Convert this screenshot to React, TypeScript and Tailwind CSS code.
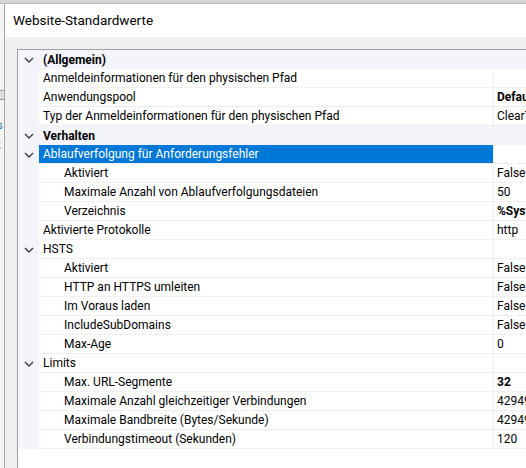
import React from "react";

type Row = {
  label: string;
  value?: string;
  indent?: boolean;
  category?: boolean;
  expandable?: boolean;
  boldValue?: boolean;
  selected?: boolean;
};

const rows: Row[] = [
  { label: "(Allgemein)", category: true },
  { label: "Anmeldeinformationen für den physischen Pfad", value: "" },
  { label: "Anwendungspool", value: "DefaultAppPool", boldValue: true },
  { label: "Typ der Anmeldeinformationen für den physischen Pfad", value: "ClearText" },
  { label: "Verhalten", category: true },
  { label: "Ablaufverfolgung für Anforderungsfehler", expandable: true, selected: true },
  { label: "Aktiviert", value: "False", indent: true },
  { label: "Maximale Anzahl von Ablaufverfolgungsdateien", value: "50", indent: true },
  { label: "Verzeichnis", value: "%SystemDrive%\\inetpub\\logs", indent: true, boldValue: true },
  { label: "Aktivierte Protokolle", value: "http" },
  { label: "HSTS", expandable: true },
  { label: "Aktiviert", value: "False", indent: true },
  { label: "HTTP an HTTPS umleiten", value: "False", indent: true },
  { label: "Im Voraus laden", value: "False", indent: true },
  { label: "IncludeSubDomains", value: "False", indent: true },
  { label: "Max-Age", value: "0", indent: true },
  { label: "Limits", expandable: true },
  { label: "Max. URL-Segmente", value: "32", indent: true, boldValue: true },
  { label: "Maximale Anzahl gleichzeitiger Verbindungen", value: "4294967295", indent: true },
  { label: "Maximale Bandbreite (Bytes/Sekunde)", value: "4294967295", indent: true },
  { label: "Verbindungstimeout (Sekunden)", value: "120", indent: true },
];

function Chevron() {
  return (
    <svg width="10" height="6" viewBox="0 0 10 6" className="block">
      <path d="M1 1 L5 5 L9 1" fill="none" stroke="#3c3c3c" strokeWidth="1.4" />
    </svg>
  );
}

function GridRow({ row }: { row: Row }) {
  const hasChevron = row.category || row.expandable;
  if (row.category) {
    return (
      <div className="flex h-[19px] bg-[#f3f5fa]">
        <div className="w-[21px] shrink-0 flex items-center justify-center">
          <Chevron />
        </div>
        <div className="flex-1 flex items-center pl-[4px] font-bold whitespace-nowrap">{row.label}</div>
      </div>
    );
  }
  return (
    <div className="flex h-[19px]">
      <div className="w-[21px] shrink-0 bg-[#f3f5fa] flex items-center justify-center">
        {hasChevron && <Chevron />}
      </div>
      <div className="flex-1 flex min-w-0 border-b border-[#f0f0f0]">
        <div
          className={
            row.selected
              ? "w-[454px] shrink-0 flex items-center bg-[#0078d7] text-white pl-[4px] whitespace-nowrap overflow-hidden"
              : "w-[454px] shrink-0 flex items-center pl-[4px] whitespace-nowrap overflow-hidden"
          }
        >
          <span className={row.indent ? "pl-[21px]" : ""}>{row.label}</span>
        </div>
        <div className="w-px shrink-0 bg-[#f0f0f0]" />
        <div
          className={
            row.boldValue
              ? "flex-1 flex items-center pl-[3px] whitespace-nowrap overflow-hidden font-bold"
              : "flex-1 flex items-center pl-[3px] whitespace-nowrap overflow-hidden"
          }
        >
          {row.value}
        </div>
      </div>
    </div>
  );
}

export default function App() {
  return (
    <div
      className="w-[526px] h-[468px] overflow-hidden bg-white flex flex-col text-[12px] text-black"
      style={{ fontFamily: 'Roboto, "Noto Sans", sans-serif' }}
    >
      <div className="h-[4px] shrink-0 bg-[#d3d5d9] border-b border-[#b4b7bc]" />
      <div className="flex flex-1 min-h-0">
        {/* sliver of the window behind the dialog */}
        <div className="w-[4px] shrink-0 bg-[#f4f4f4] flex flex-col overflow-hidden text-[11px] leading-none">
          <div className="h-[86px]" />
          <div className="h-[10px] border-y border-[#9a9a9a] bg-[#dcdcdc]" />
          <div className="h-[20px]" />
          <div className="text-[#2a6fb8] -ml-[3px]">s</div>
          <div className="h-[8px]" />
          <div className="-ml-[3px]">t</div>
        </div>
        <div className="w-px shrink-0 bg-[#a7a7a7]" />
        <div className="flex-1 flex flex-col min-w-0 bg-[#f0f0f0]">
          <div className="h-[33px] shrink-0 bg-white flex items-center pl-[8px] text-[13.5px]">
            Website-Standardwerte
          </div>
          <div className="h-[12px] shrink-0" />
          <div className="flex-1 ml-[12px] border-l border-t border-[#a0a0a0] bg-white flex flex-col">
            {rows.map((r, i) => (
              <GridRow key={i} row={r} />
            ))}
          </div>
        </div>
      </div>
    </div>
  );
}
